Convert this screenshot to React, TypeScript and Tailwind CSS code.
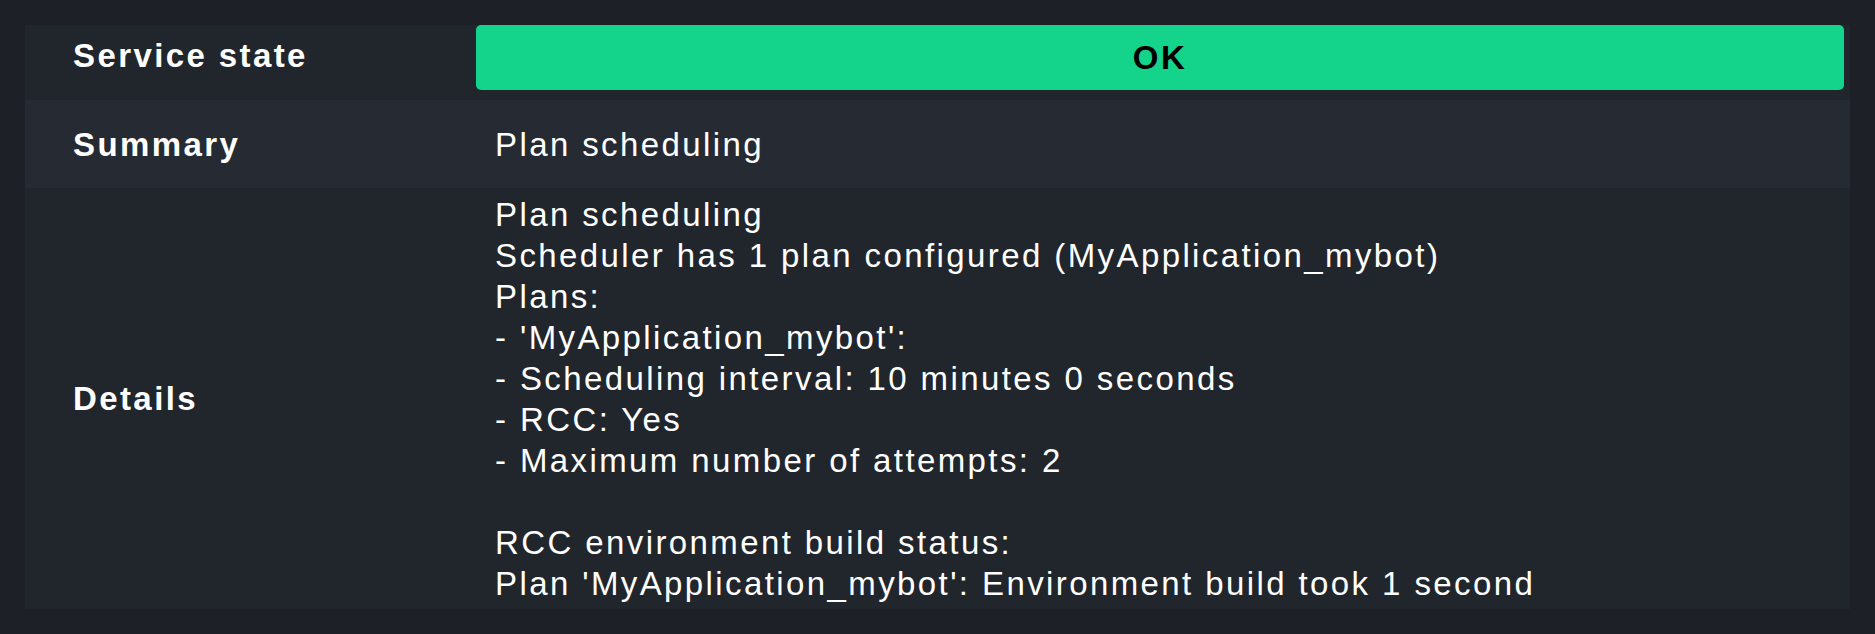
const detailLines = [
  'Plan scheduling',
  'Scheduler has 1 plan configured (MyApplication_mybot)',
  'Plans:',
  "- 'MyApplication_mybot':",
  '- Scheduling interval: 10 minutes 0 seconds',
  '- RCC: Yes',
  '- Maximum number of attempts: 2',
  '',
  'RCC environment build status:',
  "Plan 'MyApplication_mybot': Environment build took 1 second",
];

export default function App() {
  return (
    <div className="h-[634px] w-full bg-[#1e2028] px-[25px] pt-[25px] font-['Liberation_Sans',Arial,sans-serif] text-[33px] leading-[41px] tracking-[2.4px] text-white">
      <div className="grid grid-cols-[451px_1fr]">
        {/* service state */}
        <div className="h-[75px] bg-[#21262d] pl-[48px] pt-[10px] font-bold">Service state</div>
        <div className="h-[75px] bg-[#21262d] pr-[6px]">
          <div className="flex h-[65px] items-center justify-center rounded-[5px] bg-[#14d38b] font-bold text-black">
            OK
          </div>
        </div>

        {/* summary */}
        <div className="flex h-[88px] items-center bg-[#262b33] pl-[48px] font-bold">Summary</div>
        <div className="flex h-[88px] items-center bg-[#262b33] pl-[19px]">Plan scheduling</div>

        {/* details */}
        <div className="flex items-center bg-[#21262d] pl-[48px] font-bold">Details</div>
        <div className="bg-[#21262d] pb-[5px] pl-[19px] pt-[6px]">
          {detailLines.map((line, i) => (
            <div key={i} className="h-[41px] whitespace-pre">
              {line}
            </div>
          ))}
        </div>
      </div>
    </div>
  );
}
